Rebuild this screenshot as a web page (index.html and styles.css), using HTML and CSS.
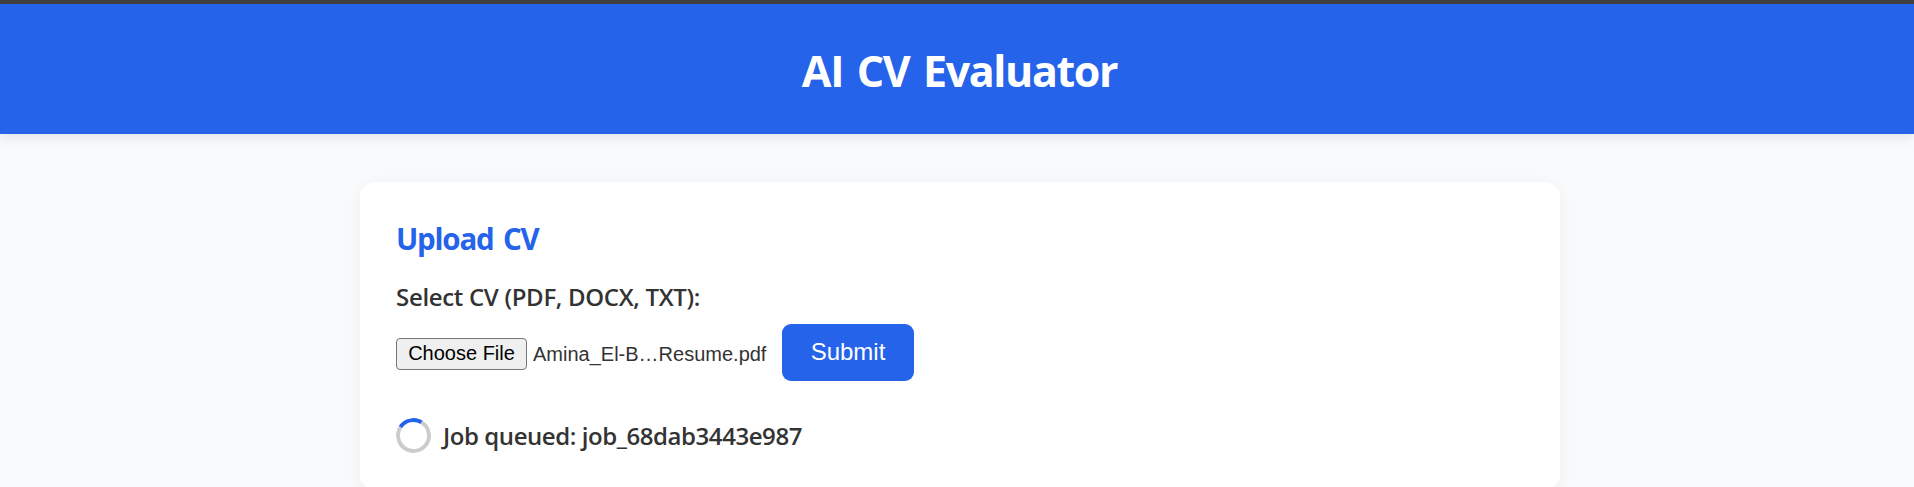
FILE: index.html
```
<!DOCTYPE html>
<html lang="en">
<head>
<meta charset="utf-8">
<title>AI CV Evaluator</title>
<link rel="stylesheet" href="styles.css">
</head>
<body>
<header class="header"><h1 class="title">AI CV Evaluator</h1></header>
<main class="card">
  <h2 class="heading">Upload CV</h2>
  <div class="label"><span class="label-text">Select CV (PDF, DOCX, TXT):</span></div>
  <form class="form">
    <button type="button" class="choose">Choose File</button>
    <span class="filename">Amina_El-B…Resume.pdf</span>
    <button type="button" class="submit">Submit</button>
  </form>
  <div class="status">
    <span class="spinner"></span>
    <span class="status-text">Job queued: job_68dab3443e987</span>
  </div>
</main>
</body>
</html>
```
FILE: styles.css
```
* { box-sizing: border-box; }
html { overflow: hidden; }
body {
  margin: 0;
  height: 487px;
  overflow: hidden;
  background: #f9fafb;
  color: #333;
  font-family: "Segoe UI", "Open Sans", "Noto Sans", sans-serif;
}
.header {
  height: 134px;
  border-top: 4px solid #404040;
  background: #2563eb;
  box-shadow: 0 3px 12px rgba(0, 0, 0, .1);
  text-align: center;
  padding: 37px 0 0 5px;
}
.title {
  margin: 0;
  color: #fff;
  font-size: 43px;
  font-weight: 700;
  line-height: 60px;
  letter-spacing: -1.4px;
  word-spacing: 4px;
}
.card {
  width: 1200px;
  height: 308px;
  margin: 48px 0 0 360px;
  padding: 37px 36px 36px;
  background: #fff;
  border-radius: 15px;
  box-shadow: 0 3px 15px rgba(0, 0, 0, .05);
}
.heading {
  margin: 0;
  color: #2563eb;
  font-size: 29.5px;
  font-weight: 700;
  line-height: 40px;
  letter-spacing: -1.2px;
  word-spacing: 3px;
}
.label {
  margin-top: 22px;
  font-size: 24px;
  font-weight: 600;
  line-height: 32px;
}
.label-text { letter-spacing: -.32px; }
.form {
  display: flex;
  align-items: center;
  height: 57px;
  margin-top: 11px;
  font-family: "Liberation Sans", Arial, sans-serif;
}
.choose {
  width: 131px;
  height: 32px;
  margin-top: 3px;
  padding: 0 0 2px;
  border: 1px solid #767676;
  border-radius: 4px;
  background: #efefef;
  color: #000;
  font: 20px "Liberation Sans", Arial, sans-serif;
}
.filename {
  width: 249px;
  margin: 2px 0 0 6px;
  font-size: 20px;
  line-height: 24px;
  white-space: nowrap;
}
.submit {
  width: 132px;
  height: 57px;
  padding: 0 0 1px;
  border: 0;
  border-radius: 9px;
  background: #2563eb;
  color: #fff;
  font: 24px "Liberation Sans", Arial, sans-serif;
}
.status {
  display: flex;
  align-items: center;
  height: 36px;
  margin-top: 37px;
  font-size: 24px;
  font-weight: 600;
  line-height: 32px;
}
.spinner {
  width: 35px;
  height: 35px;
  margin-bottom: 2px;
  border: 4px solid #ccc;
  border-top-color: #2563eb;
  border-radius: 50%;
  transform: rotate(-13deg);
}
.status-text {
  margin-left: 12px;
  letter-spacing: -.43px;
}
```
